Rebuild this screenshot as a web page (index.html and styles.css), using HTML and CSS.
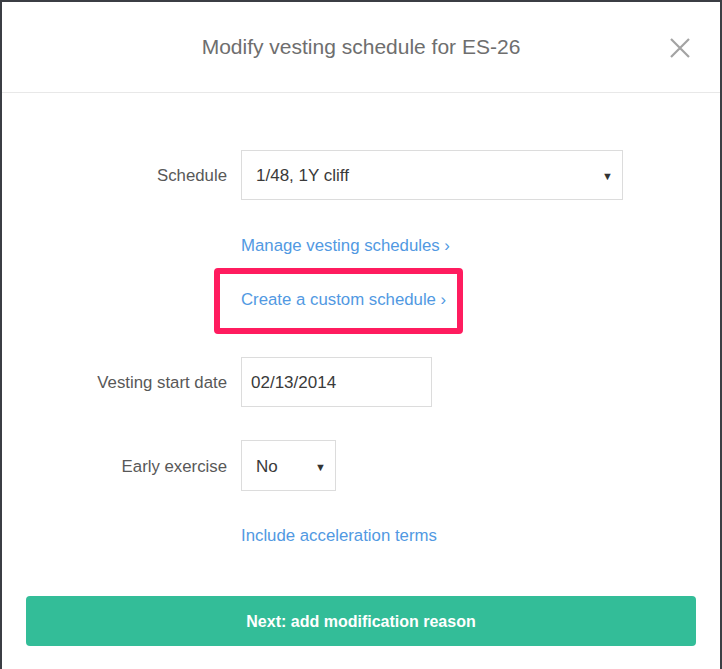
FILE: index.html
```html
<!DOCTYPE html>
<html>
<head>
<meta charset="utf-8">
<link rel="stylesheet" href="styles.css">
</head>
<body>
<div class="modal">
  <div class="modal-header">
    <h1 class="title">Modify vesting schedule for ES-26</h1>
    <button class="close" aria-label="Close">
      <svg width="20" height="20" viewBox="0 0 20 20"><path d="M1 1 L19 19 M19 1 L1 19" stroke="#a3a3a3" stroke-width="2.2" fill="none"/></svg>
    </button>
  </div>
  <div class="modal-body">
    <div class="row row-schedule">
      <label class="label">Schedule</label>
      <div class="field select select-wide"><span>1/48, 1Y cliff</span><span class="caret">▼</span></div>
    </div>
    <div class="row row-link1">
      <span></span>
      <a class="link">Manage vesting schedules ›</a>
    </div>
    <div class="row row-link2">
      <span></span>
      <div class="highlight-wrap">
        <a class="link">Create a custom schedule ›</a>
        <div class="highlight"></div>
      </div>
    </div>
    <div class="row row-date">
      <label class="label">Vesting start date</label>
      <div class="field input-date">02/13/2014</div>
    </div>
    <div class="row row-early">
      <label class="label">Early exercise</label>
      <div class="field select select-small"><span>No</span><span class="caret">▼</span></div>
    </div>
    <div class="row row-link3">
      <span></span>
      <a class="link">Include acceleration terms</a>
    </div>
    <button class="next">Next: add modification reason</button>
  </div>
</div>
</body>
</html>
```
FILE: styles.css
```css
html, body {
  margin: 0;
  padding: 0;
  height: 100%;
  background: #3b3e44;
  overflow: hidden;
}
.modal {
  margin: 2px 2px 0 2px;
  background: #ffffff;
  height: 667px;
  font-family: "Liberation Sans", Arial, sans-serif;
}
.modal-header {
  position: relative;
  height: 90px;
  border-bottom: 1px solid #e8e8e8;
  display: flex;
  align-items: center;
  justify-content: center;
}
.title {
  margin: 0;
  font-weight: normal;
  font-size: 21px;
  line-height: 24px;
  color: #6e6e6e;
}
.close {
  position: absolute;
  right: 30px;
  top: 36px;
  width: 20px;
  height: 20px;
  padding: 0;
  border: 0;
  background: none;
}
.close svg { display: block; }
.modal-body {
  padding: 57px 24px 0 24px;
}
.row {
  display: grid;
  grid-template-columns: 201px auto;
  column-gap: 14px;
  align-items: center;
  justify-items: start;
}
.label {
  justify-self: end;
  font-size: 16.8px;
  line-height: 20px;
  padding-top: 2px;
  color: #585858;
}
.field {
  box-sizing: border-box;
  border: 1px solid #dcdcdc;
  height: 50px;
  padding: 2px 9px 0 14px;
  display: flex;
  align-items: center;
  font-size: 17px;
  line-height: 20px;
  color: #3a3a3a;
}
.select { justify-content: space-between; }
.select-wide { width: 382px; }
.select-small { width: 95px; height: 51px; }
.input-date { width: 191px; padding-left: 9px; }
.caret {
  font-size: 11px;
  color: #333;
}
.link {
  font-size: 16.8px;
  color: #5199e2;
  line-height: 20px;
}
.row-link1 { margin-top: 36px; }
.row-link2 { margin-top: 34px; }
.highlight-wrap {
  position: relative;
}
.highlight {
  position: absolute;
  left: -27px;
  top: -22px;
  width: 249px;
  height: 66px;
  box-sizing: border-box;
  border: 6px solid #ff1c5f;
  border-radius: 4px;
}
.row-date { margin-top: 47px; }
.row-early { margin-top: 33px; }
.row-link3 { margin-top: 35px; }
.next {
  display: block;
  width: 670px;
  height: 50px;
  margin: 50px 0 0 0;
  padding-top: 3px;
  border: 0;
  border-radius: 4px;
  background: #33bd98;
  color: #ffffff;
  font-family: "Liberation Sans", Arial, sans-serif;
  font-weight: bold;
  font-size: 16px;
}
```
